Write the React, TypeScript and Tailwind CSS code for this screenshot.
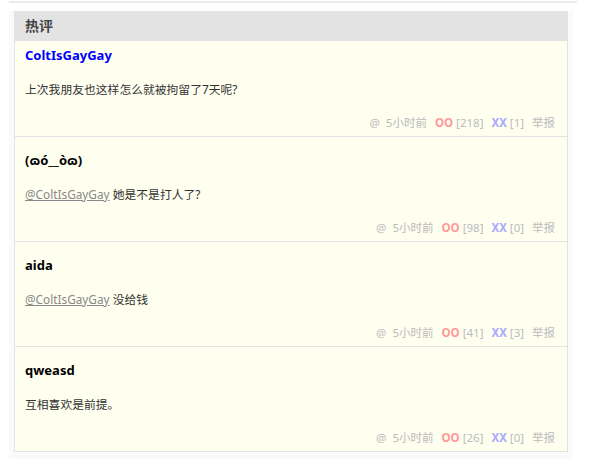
import React from 'react';

interface Comment {
  user: string;
  userClass: string;
  mention?: string;
  text: string;
  oo: number;
  xx: number;
}

const comments: Comment[] = [
  { user: 'ColtIsGayGay', userClass: 'text-[#0000ff]', text: '上次我朋友也这样怎么就被拘留了7天呢?', oo: 218, xx: 1 },
  { user: '(ɷó__òɷ)', userClass: 'text-black', mention: '@ColtIsGayGay', text: '她是不是打人了?', oo: 98, xx: 0 },
  { user: 'aida', userClass: 'text-black', mention: '@ColtIsGayGay', text: '没给钱', oo: 41, xx: 3 },
  { user: 'qweasd', userClass: 'text-black', text: '互相喜欢是前提。', oo: 26, xx: 0 },
];

function CommentRow({ c }: { c: Comment }) {
  return (
    <li className="flex h-[105px] flex-col border-t border-[#e3e3e3] bg-[#fffff0] px-[10px] pt-[14px] pb-[4px] first:h-[95px] first:border-t-0 first:pt-[5px] first:pb-[4px]">
      <div className={`h-[18px] text-[13px] font-bold leading-[18px] ${c.userClass}`}>{c.user}</div>
      <div className="mt-[16px] h-[18px] text-[11.8px] leading-[18px] text-[#333]">
        {c.mention && <span className="text-[#888] underline">{c.mention}</span>}
        {c.mention && ' '}
        {c.text}
      </div>
      <div className="mt-auto flex justify-end gap-[8px] pr-[2px] text-[11.5px] leading-[18px] text-[#bbb]">
        <span>@&nbsp;&nbsp;5小时前</span>
        <span>
          <span className="font-bold text-[#ff9999]">OO</span> [{c.oo}]
        </span>
        <span>
          <span className="font-bold text-[#aaaaff]">XX</span> [{c.xx}]
        </span>
        <span>举报</span>
      </div>
    </li>
  );
}

export default function App() {
  return (
    <div
      className="h-[459px] w-[590px] overflow-hidden bg-white"
      style={{ fontFamily: '"Noto Sans", "Noto Sans CJK SC", sans-serif' }}
    >
      <div className="ml-[9px] mt-[1px] h-[2px] w-[568px] bg-[#ebebeb]" />
      <div className="ml-[9px] mt-[8px] h-[448px] w-[564px] bg-[#fafafa] pl-[5px]">
        <section className="w-[554px] border border-t-0 border-[#e3e3e3]">
          <h2 className="h-[30px] bg-[#e3e3e3] pl-[10px] text-[14px] font-bold leading-[30px] text-[#444]">热评</h2>
          <ul>
            {comments.map((c, i) => (
              <CommentRow key={i} c={c} />
            ))}
          </ul>
        </section>
      </div>
    </div>
  );
}
